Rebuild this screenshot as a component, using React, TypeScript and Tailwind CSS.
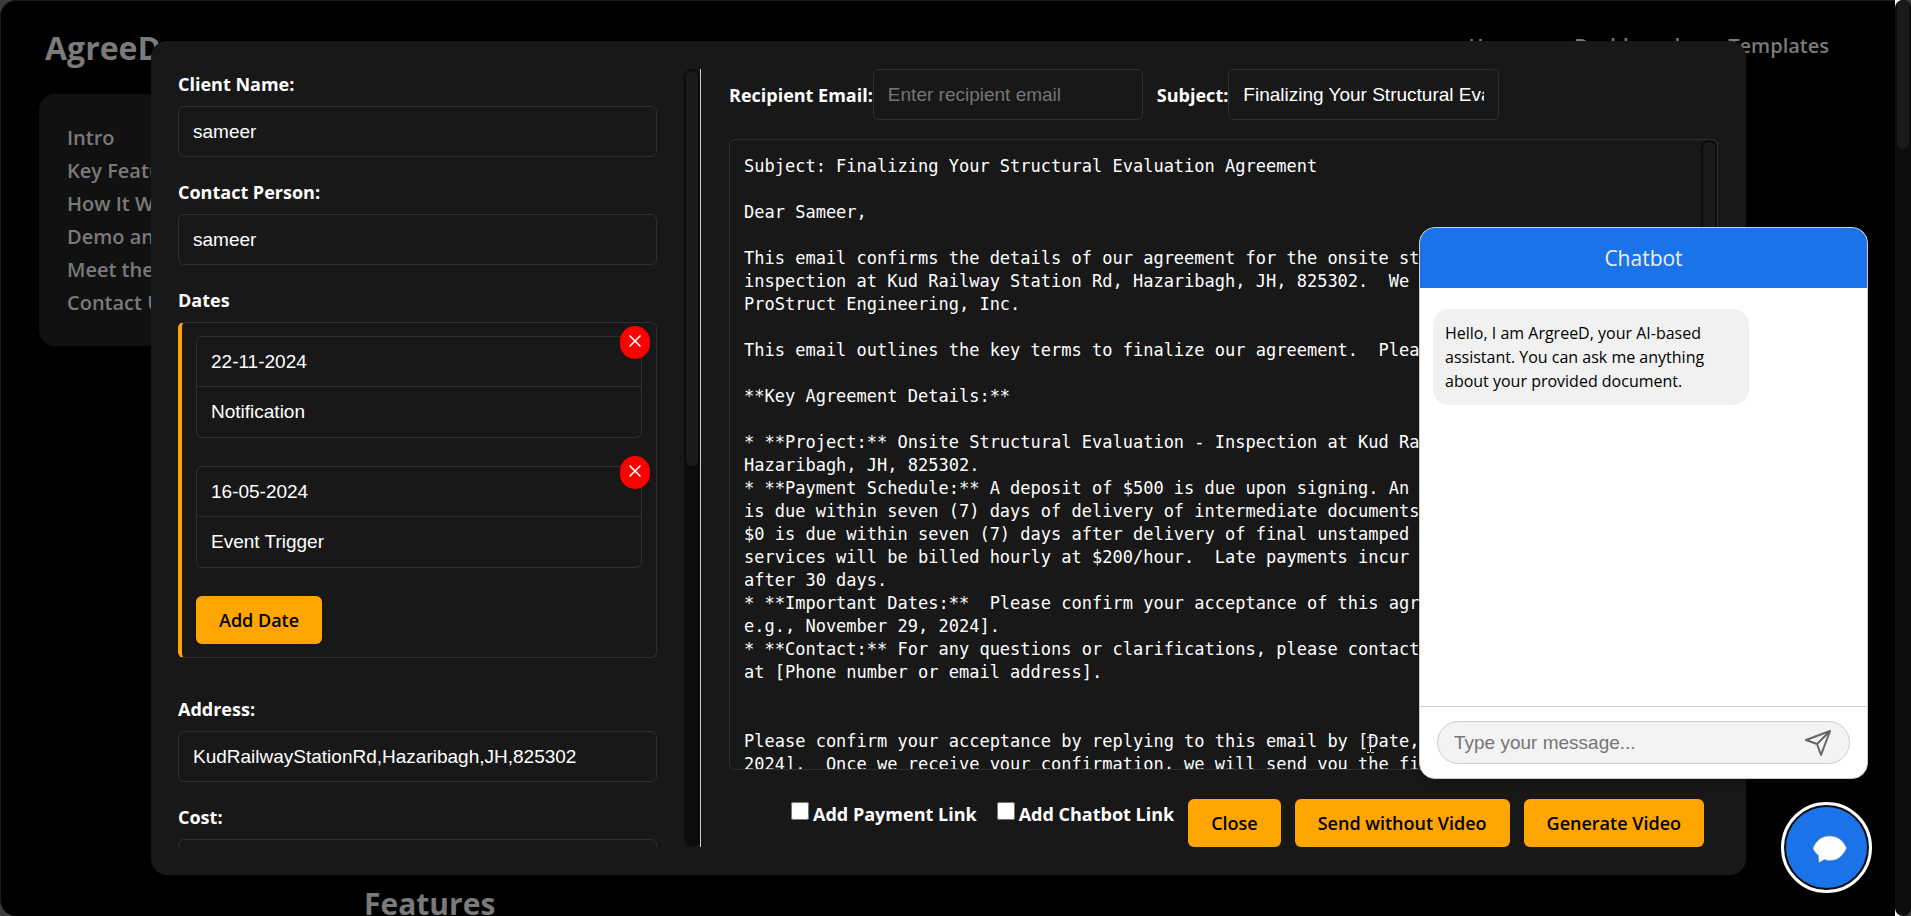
import { useState } from 'react';
import { X } from 'lucide-react';

const email = `Subject: Finalizing Your Structural Evaluation Agreement

Dear Sameer,

This email confirms the details of our agreement for the onsite structural evaluation and
inspection at Kud Railway Station Rd, Hazaribagh, JH, 825302.  We are pleased to work with
ProStruct Engineering, Inc.

This email outlines the key terms to finalize our agreement.  Please review them below.

**Key Agreement Details:**

* **Project:** Onsite Structural Evaluation - Inspection at Kud Railway Station Rd,
Hazaribagh, JH, 825302.
* **Payment Schedule:** A deposit of $500 is due upon signing. An additional payment
is due within seven (7) days of delivery of intermediate documents. The balance of
$0 is due within seven (7) days after delivery of final unstamped plans. Additional
services will be billed hourly at $200/hour.  Late payments incur a service charge
after 30 days.
* **Important Dates:**  Please confirm your acceptance of this agreement by [Date,
e.g., November 29, 2024].
* **Contact:** For any questions or clarifications, please contact us
at [Phone number or email address].


Please confirm your acceptance by replying to this email by [Date, e.g., November 29,
2024].  Once we receive your confirmation, we will send you the final agreement.
`;

const sections = ['Intro', 'Key Features', 'How It Works', 'Demo and Usage', 'Meet the Team', 'Contact Us'];

const inputStyle =
  'h-[51px] rounded-md border border-[#303030] bg-[#181818] px-3.5 font-["Liberation_Sans",sans-serif] text-[19px] text-white outline-none';
const labelStyle = 'font-bold text-white';
const buttonStyle = 'h-12 rounded-md bg-[#ffa500] px-[23px] font-semibold text-black';

function Field({ id, label, value }: { id: string; label: string; value: string }) {
  return (
    <div className="mb-[23px] flex flex-col gap-2.5">
      <label htmlFor={id} className={`${labelStyle} leading-6`}>{label}</label>
      <input id={id} className={`${inputStyle} w-full`} defaultValue={value} />
    </div>
  );
}

export default function App() {
  const [dates, setDates] = useState([
    { date: '22-11-2024', event: 'Notification' },
    { date: '16-05-2024', event: 'Event Trigger' },
  ]);
  const [body, setBody] = useState(email);

  return (
    <div className='relative flex h-screen overflow-hidden bg-[#3c3c3c] font-["Open_Sans",sans-serif] text-lg'>
      {/* Page behind the dialog */}
      <div className="min-w-0 flex-1 overflow-hidden rounded-l-2xl border-l border-t border-[#1a1a1a] bg-black px-[38px] text-[#7a7a7a]">
        <header className="flex h-[93px] items-center justify-between pl-1.5 pr-7">
          <h1 className="text-[32px] font-bold">AgreeD</h1>
          <nav className="flex gap-12 pb-1 text-xl font-semibold">
            <a href="#home">Home</a>
            <a href="#dashboard">Dashboard</a>
            <a href="#templates">Templates</a>
          </nav>
        </header>
        <aside className="w-72 rounded-2xl bg-[#111] px-7 py-[27px] text-xl font-semibold leading-[33px]">
          {sections.map(s => <a key={s} href="#section" className="block">{s}</a>)}
        </aside>
        <h2 className="ml-[325px] mt-[538px] text-3xl font-bold leading-10">Features</h2>
      </div>
      <div className="w-4 bg-linear-to-r from-white from-50% to-[#3c3c3c] to-50%">
        <div className="h-full rounded-full bg-[#0c0c0c] px-0.5">
          <div className="h-[149px] rounded-full bg-[#1a1a1a]" />
        </div>
      </div>

      {/* Edit dialog */}
      <div className="absolute inset-0 flex items-center justify-center pl-0.5 pr-4">
        <div role="dialog" className="flex h-[834px] w-[1595px] max-w-full rounded-2xl bg-[#181818] py-7 pl-[27px] pr-7">
          <div className="flex w-[523px] shrink-0 border-r border-[#ccc]">
            <div className="min-w-0 flex-1 overflow-hidden pr-[27px] pt-[3px]">
              <Field id="client" label="Client Name:" value="sameer" />
              <Field id="contact" label="Contact Person:" value="sameer" />
              <h3 className={`${labelStyle} mb-2.5 leading-6`}>Dates</h3>
              <div className="mb-[39px] rounded-md border border-l-4 border-[#303030] border-l-[#ffa500] px-3.5 py-[13px]">
                {dates.map((d, i) => (
                  <div key={d.date} className="relative mb-7 flex flex-col">
                    <input aria-label="Date" className={`${inputStyle} w-full rounded-b-none`} defaultValue={d.date} />
                    <input aria-label="Event" className={`${inputStyle} w-full rounded-t-none border-t-0`} defaultValue={d.event} />
                    <button
                      aria-label="Remove date"
                      className="absolute -right-2 -top-2.5 flex h-[33px] w-[30px] items-center justify-center rounded-full bg-[#f00] pb-1 text-white"
                      onClick={() => setDates(dates.filter((_, j) => j !== i))}
                    >
                      <X size={20} />
                    </button>
                  </div>
                ))}
                <button className={`${buttonStyle} block`} onClick={() => setDates([...dates, { date: '', event: '' }])}>Add Date</button>
              </div>
              <Field id="address" label="Address:" value="KudRailwayStationRd,Hazaribagh,JH,825302" />
              <Field id="cost" label="Cost:" value="" />
            </div>
            <div className="w-4 rounded-full bg-[#0c0c0c] p-0.5">
              <div className="h-[395px] rounded-full bg-[#1a1a1a]" />
            </div>
          </div>

          <div className="flex min-w-0 flex-1 flex-col pl-7">
            <div className="flex items-center">
              <label htmlFor="recipient" className={labelStyle}>Recipient Email:</label>
              <input id="recipient" className={`${inputStyle} mr-3.5 w-[270px] placeholder:text-[#757575]`} placeholder="Enter recipient email" />
              <label htmlFor="subject" className={labelStyle}>Subject:</label>
              <input id="subject" className={`${inputStyle} w-[271px]`} defaultValue="Finalizing Your Structural Evaluation Agreement" />
            </div>
            <div className="mt-[19px] flex h-[631px] overflow-hidden rounded-md border border-[#303030]">
              <textarea
                aria-label="Email body"
                className='flex-1 resize-none overflow-hidden whitespace-pre px-3.5 py-[15px] font-["DejaVu_Sans_Mono",monospace] text-[17px] leading-[23px] text-white outline-none'
                value={body}
                onChange={e => setBody(e.target.value)}
              />
              <div className="w-4 rounded-full bg-[#0c0c0c] p-0.5">
                <div className="h-[500px] rounded-full bg-[#1a1a1a]" />
              </div>
            </div>
            <div className="mt-auto flex items-start justify-end gap-3.5 pr-3.5">
              <label className={`${labelStyle} mr-1.5 mt-[3px] flex gap-1 leading-6`}><input type="checkbox" className="h-[18px] w-[18px]" />Add Payment Link</label>
              <label className={`${labelStyle} mt-[3px] flex gap-1 leading-6`}><input type="checkbox" className="h-[18px] w-[18px]" />Add Chatbot Link</label>
              <button className={buttonStyle}>Close</button>
              <button className={buttonStyle}>Send without Video</button>
              <button className={buttonStyle}>Generate Video</button>
            </div>
          </div>
        </div>
      </div>

      {/* Text cursor */}
      <svg className="absolute left-[1366px] top-[736px]" width="9" height="18" viewBox="0 0 9 18" fill="none" stroke="#ddd">
        <path d="M1 1.5 H3.5 L4.5 2.5 L5.5 1.5 H8 M4.5 2.5 V15.5 M1 16.5 H3.5 L4.5 15.5 L5.5 16.5 H8" />
      </svg>

      {/* Chatbot */}
      <div className="absolute bottom-[137px] right-[43px] flex h-[552px] w-[449px] flex-col overflow-hidden rounded-2xl border border-[#ccc] bg-white shadow-lg">
        <div className="flex h-[60px] items-center justify-center bg-[#1a73e8] text-[21px] text-[#eee]">Chatbot</div>
        <div className="flex-1 px-[13px] py-[21px]">
          <p className="w-[316px] rounded-2xl bg-[#f1f1f1] px-3 py-3 text-base text-black">
            Hello, I am ArgreeD, your AI-based assistant. You can ask me anything about your provided document.
          </p>
        </div>
        <div className="border-t border-[#ccc] px-[17px] py-3.5">
          <div className="flex h-[43px] items-center rounded-full border border-[#ccc] bg-[#f3f3f3] px-4">
            <input
              aria-label="Message"
              placeholder="Type your message..."
              className='min-w-0 flex-1 bg-transparent font-["Liberation_Sans",sans-serif] text-[19px] text-black outline-none placeholder:text-[#757575]'
            />
            <button aria-label="Send">
              <svg width="28" height="28" viewBox="0 0 28 28" fill="none" stroke="#666" strokeWidth="2" strokeLinejoin="round">
                <path d="M25 2 L1 11 L12 15 L16 26 Z M25 2 L12 15" />
              </svg>
            </button>
          </div>
        </div>
      </div>
      <button
        aria-label="Toggle chatbot"
        className="absolute bottom-7 right-11 flex h-[81px] w-[81px] items-center justify-center rounded-full bg-[#1a73e8] pl-1.5 pt-1 ring-2 ring-[#101010] outline-3 outline-offset-2 outline-white"
      >
        <svg width="36" height="29" viewBox="0 0 36 29" fill="#fff" stroke="#999" strokeWidth="0.6">
          <path d="M17.5 1 C25 1 31 5 34.5 13 C31 21 26 25.5 17.5 25.5 C15.5 25.5 14 25 12.5 24.5 L7 27.5 L6.5 20.5 C4 18.5 2 16 1 13 C4.5 5 10 1 17.5 1 Z" />
        </svg>
      </button>
    </div>
  );
}
